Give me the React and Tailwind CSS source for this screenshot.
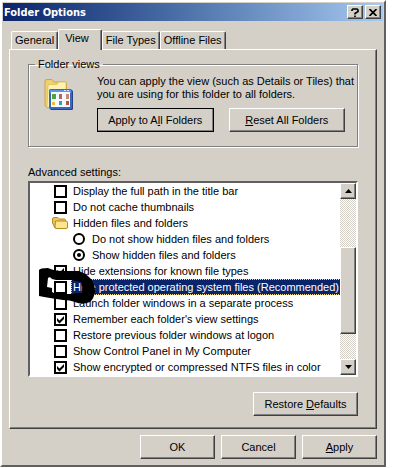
import React, { useState } from 'react';

const raised = 'border border-white border-r-[#404040] border-b-[#404040] shadow-[inset_-1px_-1px_0_#808080] bg-[#d4d0c8]';

const initialRows = [
    { id: 'fullpath', type: 'checkbox', text: 'Display the full path in the title bar', checked: false },
    { id: 'thumbs', type: 'checkbox', text: 'Do not cache thumbnails', checked: false },
    { id: 'hidden', type: 'folder', text: 'Hidden files and folders' },
    { id: 'noshow', type: 'radio', text: 'Do not show hidden files and folders', checked: false },
    { id: 'show', type: 'radio', text: 'Show hidden files and folders', checked: true },
    { id: 'ext', type: 'checkbox', text: 'Hide extensions for known file types', checked: true },
    { id: 'protected', type: 'checkbox', text: 'Hide protected operating system files (Recommended)', checked: false, selected: true },
    { id: 'launch', type: 'checkbox', text: 'Launch folder windows in a separate process', checked: false },
    { id: 'remember', type: 'checkbox', text: "Remember each folder's view settings", checked: true },
    { id: 'restore', type: 'checkbox', text: 'Restore previous folder windows at logon', checked: false },
    { id: 'cpanel', type: 'checkbox', text: 'Show Control Panel in My Computer', checked: false },
    { id: 'ntfs', type: 'checkbox', text: 'Show encrypted or compressed NTFS files in color', checked: true },
];

function Button({ children, isDefault, className = '' }) {
    return (
        <button type="button" className={`h-6 ${raised} ${isDefault ? 'outline outline-1 -outline-offset-1 outline-black' : ''} ${className}`}>
            {children}
        </button>
    );
}

function Tab({ children, active }) {
    return (
        <button
            type="button"
            role="tab"
            aria-selected={!!active}
            className={`relative rounded-t-[2px] border border-b-0 border-white border-r-[#404040] bg-[#d4d0c8] shadow-[inset_-1px_0_0_#808080] ${active ? 'z-10 -mb-px h-[21px] pr-3 pb-1 pl-[6px]' : 'h-[18px] px-[3px]'}`}
        >
            {children}
        </button>
    );
}

function FolderIcon() {
    return (
        <svg viewBox="0 0 16 14" className="h-[14px] w-4 shrink-0" aria-hidden="true">
            <path d="M0.5 3 Q0.5 1.5 2 1.5 H5.5 L7.5 3 H12.5 Q13.5 3 13.5 4.5 V12 H3 L0.5 7 Z" fill="#e9c65c" stroke="#b48a22" />
            <path d="M3.5 5 H14 Q15.5 5 15.5 6.5 V11 Q15.5 12.5 14 12.5 H5 Q3 12.5 3 11 Z" fill="#fbe68f" stroke="#b48a22" />
        </svg>
    );
}

function FolderViewsIcon() {
    return (
        <svg viewBox="0 0 32 32" className="h-8 w-8 shrink-0" aria-hidden="true">
            <path d="M4 3 Q4 1.5 6 1.5 H11 L13 4 H24 Q25.5 4 25.5 6 V26 L6 30 L4 27 Z" fill="#efd070" stroke="#c9a545" />
            <path d="M7 8 Q7 6.5 9 6.5 H16 L18 4 H25 V14 H10 V28 L6 30 Z" fill="#fdf3ae" stroke="#d8ba5c" strokeWidth="0.7" />
            <rect x="9" y="12" width="23" height="20" rx="1.5" fill="#27427f" />
            <rect x="8" y="11" width="23" height="20" rx="1.5" fill="#3568c0" />
            <rect x="9" y="12" width="21" height="3" fill="#5b95ea" />
            <rect x="10" y="14" width="19" height="15" fill="#f5f8ff" />
            <rect x="23" y="12" width="2" height="1" fill="#dce8ff" />
            <rect x="26" y="12" width="2" height="1" fill="#dce8ff" />
            <rect x="11" y="16" width="4" height="5" fill="#4ca832" />
            <rect x="18" y="16" width="3" height="5" fill="#b5655a" />
            <rect x="25" y="16" width="3" height="5" fill="#c98a70" />
            <rect x="11" y="24" width="3" height="3" fill="#e9bd3a" />
            <rect x="18" y="23" width="3" height="4" fill="#2aa2b5" />
            <rect x="25" y="23" width="3" height="4" fill="#b0553f" />
        </svg>
    );
}

function Row({ row, onToggle }) {
    const text = (
        <span className={`px-[2px] leading-4 ${row.selected ? 'bg-[#0a246a] text-white outline outline-1 -outline-offset-1 outline-dotted outline-[#f5db95]' : ''}`}>
            {row.text}
        </span>
    );

    if (row.type === 'folder') {
        return (
            <div className="flex h-4 items-center gap-[3px] pl-[22px]">
                <FolderIcon />
                {text}
            </div>
        );
    }

    return (
        <label className={`flex h-4 items-center gap-1 ${row.type === 'radio' ? 'pl-[43px]' : 'pl-6'}`}>
            <span className="relative flex h-[13px] w-[13px] shrink-0">
                <input
                    type={row.type}
                    name={row.type === 'radio' ? 'hidden-files' : row.id}
                    checked={row.checked}
                    onChange={() => onToggle(row)}
                    className={`appearance-none border-2 border-black bg-white ${row.type === 'radio' ? 'h-3 w-3 rounded-full' : 'h-[13px] w-[13px]'}`}
                />
                {row.checked && row.type === 'checkbox' && (
                    <svg viewBox="0 0 13 13" className="pointer-events-none absolute inset-0" aria-hidden="true">
                        <path d="M3 5 L5.5 7.5 L10 3 V6 L5.5 10.5 L3 8 Z" fill="#000" />
                    </svg>
                )}
                {row.checked && row.type === 'radio' && (
                    <span className="pointer-events-none absolute top-1 left-1 h-1 w-1 rounded-full bg-black" />
                )}
            </span>
            {text}
        </label>
    );
}

function ScrollBar() {
    return (
        <div className="flex w-4 shrink-0 flex-col bg-[repeating-conic-gradient(#d4d0c8_0_25%,#fff_0_50%)] bg-[length:2px_2px]">
            <button type="button" aria-label="Scroll up" className={`flex h-4 items-center justify-center ${raised}`}>
                <svg viewBox="0 0 7 4" className="h-1 w-[7px]"><path d="M3.5 0 L7 4 H0 Z" /></svg>
            </button>
            <div className="h-12" />
            <div className={`h-[87px] ${raised}`} />
            <div className="flex-1" />
            <button type="button" aria-label="Scroll down" className={`flex h-4 items-center justify-center ${raised}`}>
                <svg viewBox="0 0 7 4" className="h-1 w-[7px]"><path d="M3.5 4 L7 0 H0 Z" /></svg>
            </button>
        </div>
    );
}

export default function App() {
    const [rows, setRows] = useState(initialRows);

    function handleToggle(row) {
        setRows(rows.map((r) => {
            if (row.type === 'radio') {
                return r.type === 'radio' ? { ...r, checked: r.id === row.id } : r;
            }
            return r.id === row.id ? { ...r, checked: !r.checked } : r;
        }));
    }

    return (
        <div className="min-h-screen bg-white pr-[29px] font-['Liberation_Sans',Arial,sans-serif] text-[11px] leading-[13px] text-black">
            <div className="border-2 border-[#d4d0c8] border-t-white border-l-white border-r-[#606060] border-b-[#606060] bg-[#d4d0c8] pb-[6px]">
                <header className="mx-px mt-px flex h-[18px] items-center gap-[2px] bg-linear-to-r from-[#0a246a] to-[#a6caf0] pr-[2px] pl-px">
                    <h1 className="flex-1 font-['DejaVu_Sans_Condensed','DejaVu_Sans',sans-serif] text-[11px] font-bold text-white">Folder Options</h1>
                    <button type="button" aria-label="Help" className={`flex h-[14px] w-4 items-center justify-center ${raised}`}>
                        <svg viewBox="0 0 8 9" className="h-[9px] w-2">
                            <path d="M1 3 V2 L2 1 H6 L7 2 V3.5 L4 5.5 V6.5 M4 7.5 V9" fill="none" stroke="#000" strokeWidth="1.7" />
                        </svg>
                    </button>
                    <button type="button" aria-label="Close" className={`flex h-[14px] w-4 items-center justify-center ${raised}`}>
                        <svg viewBox="0 0 8 7" className="h-[7px] w-2">
                            <path d="M0.5 0 L7.5 7 M7.5 0 L0.5 7" stroke="#000" strokeWidth="1.7" />
                        </svg>
                    </button>
                </header>

                <div className="mx-[7px] mt-2">
                    <div role="tablist" className="flex items-end pl-[2px]">
                        <Tab>General</Tab>
                        <Tab active>View</Tab>
                        <Tab>File Types</Tab>
                        <Tab>Offline Files</Tab>
                    </div>

                    <div role="tabpanel" className={`px-[18px] pt-2 pb-3 ${raised}`}>
                        <fieldset className="min-w-0 border border-[#808080] px-3 pb-[14px] shadow-[1px_1px_0_#fff,inset_1px_1px_0_#fff]">
                            <legend className="-ml-[6px] px-[3px]">Folder views</legend>
                            <div className="flex gap-6">
                                <div className="pt-[7px]">
                                    <FolderViewsIcon />
                                </div>
                                <div className="min-w-0 flex-1">
                                    <p className="pt-1 whitespace-nowrap">
                                        You can apply the view (such as Details or Tiles) that
                                        <br />
                                        you are using for this folder to all folders.
                                    </p>
                                    <div className="mt-[7px] flex gap-[15px]">
                                        <Button isDefault className="flex-1">Apply to A<u>l</u>l Folders</Button>
                                        <Button className="flex-1"><u>R</u>eset All Folders</Button>
                                    </div>
                                </div>
                            </div>
                        </fieldset>

                        <h2 className="mt-[19px]">Advanced settings:</h2>
                        <div className="relative mt-[2px] flex border-2 border-[#606060] border-r-white border-b-white bg-white">
                            <div className="flex-1 overflow-hidden whitespace-nowrap">
                                {rows.map((row) => (
                                    <Row key={row.id} row={row} onToggle={handleToggle} />
                                ))}
                            </div>
                            <ScrollBar />
                            {/* marker ring around the protected files option */}
                            <svg viewBox="0 0 80 60" className="pointer-events-none absolute top-[72px] left-0 h-[60px] w-20" aria-hidden="true">
                                <path
                                    fillRule="evenodd"
                                    d="M9 15 Q10 13 18 13 Q24 16 32 16 L48 16 Q56 18 61 24 Q65 30 65 36 Q64 44 60 47 Q52 50 45 47 Q40 45 33 45 L20 43 Q14 42 9 41 Z M18 23 Q20 21 22 24 L26 25 L41 25 L51 27 Q53 32 52 38 L47 38 L42 39 H26 L22 37 V33 L17 32 Z"
                                />
                            </svg>
                        </div>

                        <div className="mt-[15px] flex justify-end">
                            <Button className="w-[105px]">Restore <u>D</u>efaults</Button>
                        </div>
                    </div>

                    <div className="mt-[6px] flex justify-end gap-[6px]">
                        <Button className="w-[75px]">OK</Button>
                        <Button className="w-[75px]">Cancel</Button>
                        <Button className="w-[75px]"><u>A</u>pply</Button>
                    </div>
                </div>
            </div>
        </div>
    );
}
